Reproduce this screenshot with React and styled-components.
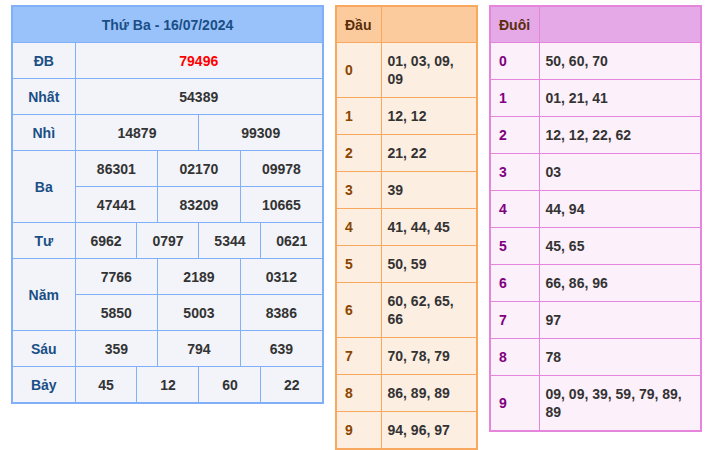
import React from 'react';
import styled, { createGlobalStyle } from 'styled-components';

const Global = createGlobalStyle`
  body { margin: 0; background: #fff; font-family: "Liberation Sans", Arial, sans-serif; }
`;

const Page = styled.div`
  display: flex;
  align-items: flex-start;
  gap: 11px;
  padding: 5px 0 0 11px;
`;

const Table = styled.table`
  border-collapse: collapse;
  width: ${p => p.w}px;
  border: 2px solid ${p => p.line};
  font-size: 14px;
  font-weight: bold;
  table-layout: fixed;
  & td, & th { border: 1px solid ${p => p.line}; }
`;

const Head = styled.th`
  background: ${p => p.bg};
  color: ${p => p.color};
  height: 35px;
  font-weight: bold;
  text-align: ${p => p.align || 'center'};
  padding: 0 8px;
`;

const Label = styled.td`
  background: #f2f4f9;
  color: #1a4f86;
  text-align: center;
  height: 35px;
  padding: 0;
`;

const Num = styled.td`
  background: #f2f4f9;
  color: ${p => (p.red ? '#ff0000' : '#333')};
  text-align: center;
  height: 35px;
  padding: 0;
`;

const Key = styled.td`
  background: ${p => p.bg};
  color: ${p => p.color};
  padding: 0 8px;
  height: 36px;
`;

const Val = styled.td`
  background: ${p => p.bg};
  color: #333;
  padding: 9px 6px;
  line-height: 18px;
`;

const dau = [
  ['0', '01, 03, 09, 09'], ['1', '12, 12'], ['2', '21, 22'], ['3', '39'], ['4', '41, 44, 45'],
  ['5', '50, 59'], ['6', '60, 62, 65, 66'], ['7', '70, 78, 79'], ['8', '86, 89, 89'], ['9', '94, 96, 97'],
];
const duoi = [
  ['0', '50, 60, 70'], ['1', '01, 21, 41'], ['2', '12, 12, 22, 62'], ['3', '03'], ['4', '44, 94'],
  ['5', '45, 65'], ['6', '66, 86, 96'], ['7', '97'], ['8', '78'], ['9', '09, 09, 39, 59, 79, 89, 89'],
];

export default function App() {
  const blue = '#7fb0f8';
  return (
    <Page>
      <Global />
      <Table w={313} line={blue}>
        <colgroup>
          <col style={{ width: 63 }} />
          {Array.from({ length: 12 }).map((_, i) => <col key={i} />)}
        </colgroup>
        <thead>
          <tr><Head colSpan={13} bg="#99c2fb" color="#1a4f86">Thứ Ba - 16/07/2024</Head></tr>
        </thead>
        <tbody>
          <tr><Label>ĐB</Label><Num colSpan={12} red>79496</Num></tr>
          <tr><Label>Nhất</Label><Num colSpan={12}>54389</Num></tr>
          <tr><Label>Nhì</Label><Num colSpan={6}>14879</Num><Num colSpan={6}>99309</Num></tr>
          <tr><Label rowSpan={2}>Ba</Label><Num colSpan={4}>86301</Num><Num colSpan={4}>02170</Num><Num colSpan={4}>09978</Num></tr>
          <tr><Num colSpan={4}>47441</Num><Num colSpan={4}>83209</Num><Num colSpan={4}>10665</Num></tr>
          <tr><Label>Tư</Label><Num colSpan={3}>6962</Num><Num colSpan={3}>0797</Num><Num colSpan={3}>5344</Num><Num colSpan={3}>0621</Num></tr>
          <tr><Label rowSpan={2}>Năm</Label><Num colSpan={4}>7766</Num><Num colSpan={4}>2189</Num><Num colSpan={4}>0312</Num></tr>
          <tr><Num colSpan={4}>5850</Num><Num colSpan={4}>5003</Num><Num colSpan={4}>8386</Num></tr>
          <tr><Label>Sáu</Label><Num colSpan={4}>359</Num><Num colSpan={4}>794</Num><Num colSpan={4}>639</Num></tr>
          <tr><Label>Bảy</Label><Num colSpan={3}>45</Num><Num colSpan={3}>12</Num><Num colSpan={3}>60</Num><Num colSpan={3}>22</Num></tr>
        </tbody>
      </Table>
      <Table w={143} line="#f9a860">
        <colgroup><col style={{ width: 45 }} /><col /></colgroup>
        <thead><tr><Head bg="#fbcb9d" color="#5a2d0c" align="left">Đầu</Head><Head bg="#fbcb9d" /></tr></thead>
        <tbody>
          {dau.map(([k, v]) => (
            <tr key={k}><Key bg="#fdeee2" color="#8b4500">{k}</Key><Val bg="#fdeee2">{v}</Val></tr>
          ))}
        </tbody>
      </Table>
      <Table w={213} line="#e585dc">
        <colgroup><col style={{ width: 49 }} /><col /></colgroup>
        <thead><tr><Head bg="#e4a9e6" color="#5a2d0c" align="left">Đuôi</Head><Head bg="#e4a9e6" /></tr></thead>
        <tbody>
          {duoi.map(([k, v]) => (
            <tr key={k}><Key bg="#fcf0fa" color="#800080">{k}</Key><Val bg="#fcf0fa">{v}</Val></tr>
          ))}
        </tbody>
      </Table>
    </Page>
  );
}
